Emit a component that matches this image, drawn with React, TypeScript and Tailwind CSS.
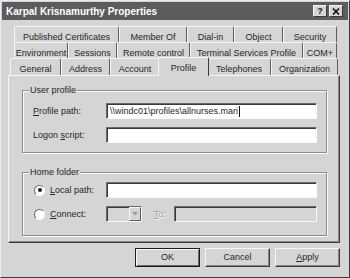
import React from "react";

function Tab({ children, className }: { children: React.ReactNode; className: string }) {
  return (
    <div
      className={`flex justify-center h-full border-t border-l border-r border-t-[#f6f6f6] border-l-[#f6f6f6] border-r-[#5e5e5e] rounded-t-[2px] whitespace-nowrap ${className}`}
    >
      {children}
    </div>
  );
}

function U({ children }: { children: React.ReactNode }) {
  return <span className="underline underline-offset-[1px]">{children}</span>;
}

function Sunken({ className, children }: { className: string; children?: React.ReactNode }) {
  return (
    <div
      className={`h-[16px] border border-t-[#6a6a6a] border-l-[#6a6a6a] border-b-[#fafafa] border-r-[#fafafa] shadow-[inset_1px_1px_0_#3a3a3a] ${className}`}
    >
      {children}
    </div>
  );
}

function Radio({ checked }: { checked: boolean }) {
  return (
    <div className="w-[11px] h-[11px] rounded-full border border-t-[#6a6a6a] border-l-[#6a6a6a] border-b-[#fafafa] border-r-[#fafafa] bg-white flex items-center justify-center">
      {checked && <div className="w-[4px] h-[4px] rounded-full bg-[#1a1a1a]" />}
    </div>
  );
}

function Button({ children, def }: { children: React.ReactNode; def?: boolean }) {
  return (
    <div
      className={
        def
          ? "w-[65px] h-[19px] flex items-center justify-center border border-[#1c1c1c] shadow-[inset_1px_1px_0_#fafafa,inset_-1px_-1px_0_#6a6a6a]"
          : "w-[65px] h-[19px] flex items-center justify-center border border-t-[#f6f6f6] border-l-[#f6f6f6] border-r-[#3a3a3a] border-b-[#3a3a3a] shadow-[inset_-1px_-1px_0_#8a8a8a]"
      }
    >
      {children}
    </div>
  );
}

export default function App() {
  return (
    <div
      className="w-[350px] h-[278px] bg-[#d5d5d5] text-[#262626] text-[9px] leading-[11px] border border-t-[#ececec] border-l-[#ececec] border-r-[#3a3a3a] border-b-[#3a3a3a] p-[1px] flex flex-col overflow-hidden"
      style={{ fontFamily: '"Liberation Sans", Arial, sans-serif' }}
    >
      {/* Title bar */}
      <div className="h-[18px] shrink-0 bg-[#5c5c5c] flex items-center justify-between pl-[4px] pr-[5px]">
        <span className="text-white font-bold text-[10px]">Karpal Krisnamurthy Properties</span>
        <div className="flex gap-[2px]">
          <div className="w-[14px] h-[12px] bg-[#d5d5d5] border border-t-[#f6f6f6] border-l-[#f6f6f6] border-r-[#3a3a3a] border-b-[#3a3a3a] flex items-center justify-center font-bold text-[9px] text-[#111]">
            ?
          </div>
          <div className="w-[14px] h-[12px] bg-[#d5d5d5] border border-t-[#f6f6f6] border-l-[#f6f6f6] border-r-[#3a3a3a] border-b-[#3a3a3a] flex items-center justify-center">
            <svg width="8" height="7" viewBox="0 0 8 7">
              <path d="M1 0.5 L7 6.5 M7 0.5 L1 6.5" stroke="#111" strokeWidth="1.6" />
            </svg>
          </div>
        </div>
      </div>

      {/* Tabs */}
      <div className="mt-[6px] ml-[6px] w-[332px] flex flex-col">
        <div className="flex h-[16px] ml-[6px]">
          <Tab className="w-[105px] pt-[5px]">Published Certificates</Tab>
          <Tab className="w-[68px] pt-[5px]">Member Of</Tab>
          <Tab className="w-[47px] pt-[5px]">Dial-in</Tab>
          <Tab className="w-[49px] pt-[5px]">Object</Tab>
          <Tab className="w-[54px] pt-[5px]">Security</Tab>
        </div>
        <div className="flex h-[16px] ml-[6px]">
          <Tab className="w-[54px] pt-[5px]">Environment</Tab>
          <Tab className="w-[49px] pt-[5px]">Sessions</Tab>
          <Tab className="w-[73px] pt-[5px]">Remote control</Tab>
          <Tab className="w-[113px] pt-[5px]">Terminal Services Profile</Tab>
          <Tab className="w-[34px] pt-[5px]">COM+</Tab>
        </div>
        <div className="flex items-end h-[17px] ml-[2px]">
          <Tab className="w-[51px] pt-[5px]">General</Tab>
          <Tab className="w-[49px] pt-[5px]">Address</Tab>
          <Tab className="w-[50px] pt-[5px]">Account</Tab>
          <div className="relative z-10 w-[51px] h-[19px] -mx-[2px] -mb-[1px] bg-[#d5d5d5] flex justify-center pt-[5px] border-t border-l border-r border-t-[#f6f6f6] border-l-[#f6f6f6] border-r-[#3a3a3a] rounded-t-[2px]">
            Profile
          </div>
          <Tab className="w-[64px] pt-[5px]">Telephones</Tab>
          <Tab className="w-[67px] pt-[5px]">Organization</Tab>
        </div>

        {/* Panel */}
        <div className="h-[168px] border border-t-[#f6f6f6] border-l-[#f6f6f6] border-r-[#3a3a3a] border-b-[#3a3a3a] shadow-[inset_-1px_-1px_0_#8a8a8a] flex flex-col">
          {/* User profile */}
          <div className="mt-[14px] ml-[13px] w-[305px] h-[63px] border border-[#8e8e8e] shadow-[inset_1px_1px_0_#fafafa,1px_1px_0_#fafafa] flex flex-col">
            <div className="-mt-[6px] ml-[6px] px-[1px] w-fit bg-[#d5d5d5] leading-[11px]">User profile</div>
            <div className="flex items-center mt-[7px]">
              <div className="w-[83px] pl-[10px]">
                <U>P</U>rofile path:
              </div>
              <Sunken className="w-[211px] bg-white flex items-center pl-[3px] pt-[1px]">
                <span>{"\\\\windc01\\profiles\\allnurses.mari"}</span>
                <span className="w-[1px] h-[11px] bg-[#111] ml-[1px]" />
              </Sunken>
            </div>
            <div className="flex items-center mt-[8px]">
              <div className="w-[83px] pl-[10px]">
                Logon <U>s</U>cript:
              </div>
              <Sunken className="w-[211px] bg-white" />
            </div>
          </div>

          {/* Home folder */}
          <div className="mt-[19px] ml-[13px] w-[305px] h-[64px] border border-[#8e8e8e] shadow-[inset_1px_1px_0_#fafafa,1px_1px_0_#fafafa] flex flex-col">
            <div className="-mt-[6px] ml-[6px] px-[1px] w-fit bg-[#d5d5d5] leading-[11px]">Home folder</div>
            <div className="flex items-center mt-[4px]">
              <div className="w-[83px] pl-[11px] flex items-center gap-[5px]">
                <Radio checked />
                <span>
                  <U>L</U>ocal path:
                </span>
              </div>
              <Sunken className="w-[211px] bg-white" />
            </div>
            <div className="flex items-center mt-[8px]">
              <div className="w-[83px] pl-[11px] flex items-center gap-[5px]">
                <Radio checked={false} />
                <span>
                  <U>C</U>onnect:
                </span>
              </div>
              <Sunken className="w-[36px] flex justify-end">
                <div className="w-[12px] h-full border border-t-[#f6f6f6] border-l-[#f6f6f6] border-r-[#5e5e5e] border-b-[#5e5e5e] flex items-center justify-center">
                  <svg width="6" height="4" viewBox="0 0 6 4">
                    <path d="M0 0 H6 L3 3.5 Z" fill="#9a9a9a" />
                  </svg>
                </div>
              </Sunken>
              <span className="ml-[12px] w-[20px] text-[#a0a0a0] [text-shadow:1px_1px_0_#fafafa]">
                <U>T</U>o:
              </span>
              <Sunken className="w-[143px]" />
            </div>
          </div>
        </div>

        {/* Buttons */}
        <div className="mt-[5px] flex justify-end gap-[5px]">
          <Button def>OK</Button>
          <Button>Cancel</Button>
          <Button>
            <span>
              <U>A</U>pply
            </span>
          </Button>
        </div>
      </div>
    </div>
  );
}
